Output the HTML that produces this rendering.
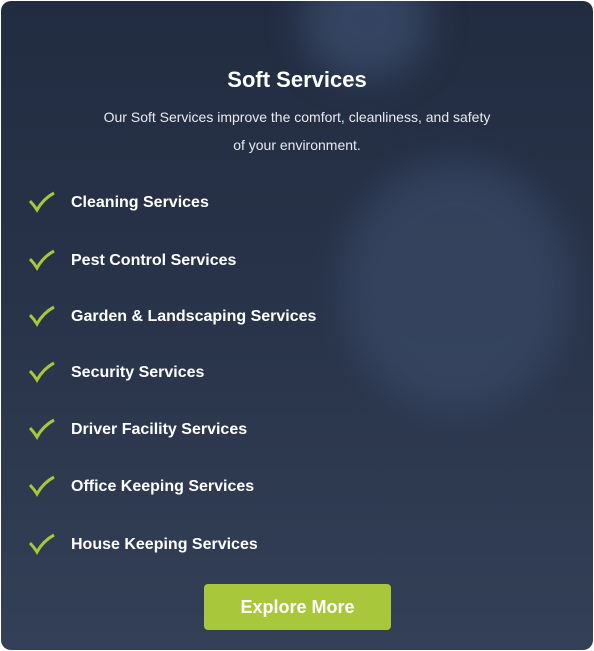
<!DOCTYPE html>
<html><head><meta charset="utf-8"><style>
html,body{margin:0;padding:0;background:#fff;}
body{width:594px;height:651px;overflow:hidden;font-family:"Liberation Sans",sans-serif;}
.card{position:absolute;left:1px;top:1px;width:592px;height:649px;border-radius:10px;overflow:hidden;
background:linear-gradient(180deg,#222c41 0%,#283349 45%,#344057 100%);}
.blob{position:absolute;border-radius:50%;filter:blur(18px);}
h2{position:absolute;left:0;right:0;top:66px;margin:0;text-align:center;color:#fff;font-size:22px;font-weight:bold;}
p{position:absolute;left:80px;right:80px;top:102px;margin:0;text-align:center;color:#e8ebf0;font-size:14px;line-height:28px;}
.item{position:absolute;left:28px;height:24px;color:#fff;font-weight:bold;font-size:16px;}
.item svg{position:absolute;left:0;top:0;}
.item span{position:absolute;left:42px;top:3px;white-space:nowrap;}
.btn{position:absolute;left:204px;top:584px;width:187px;height:46px;background:#a8c73a;border-radius:4px;color:#fff;font-weight:bold;font-size:18px;text-align:center;line-height:47px;}
</style></head><body>
<div class="card">
<div class="blob" style="left:300px;top:-40px;width:130px;height:120px;background:#3a4a68;opacity:.8"></div>
<div class="blob" style="left:340px;top:160px;width:230px;height:250px;background:#3a4966;opacity:.7"></div>
<h2>Soft Services</h2>
<p>Our Soft Services improve the comfort, cleanliness, and safety<br>of your environment.</p>
<div class="item" style="top:190px"><svg width="26" height="22" viewBox="0 0 26 22"><path d="M1 10 Q5 14 8 19 Q14 8 25 2" fill="none" stroke="#a8c73a" stroke-width="3"/></svg><span>Cleaning Services</span></div>
<div class="item" style="top:248px"><svg width="26" height="22" viewBox="0 0 26 22"><path d="M1 10 Q5 14 8 19 Q14 8 25 2" fill="none" stroke="#a8c73a" stroke-width="3"/></svg><span>Pest Control Services</span></div>
<div class="item" style="top:304px"><svg width="26" height="22" viewBox="0 0 26 22"><path d="M1 10 Q5 14 8 19 Q14 8 25 2" fill="none" stroke="#a8c73a" stroke-width="3"/></svg><span>Garden &amp; Landscaping Services</span></div>
<div class="item" style="top:360px"><svg width="26" height="22" viewBox="0 0 26 22"><path d="M1 10 Q5 14 8 19 Q14 8 25 2" fill="none" stroke="#a8c73a" stroke-width="3"/></svg><span>Security Services</span></div>
<div class="item" style="top:417px"><svg width="26" height="22" viewBox="0 0 26 22"><path d="M1 10 Q5 14 8 19 Q14 8 25 2" fill="none" stroke="#a8c73a" stroke-width="3"/></svg><span>Driver Facility Services</span></div>
<div class="item" style="top:474px"><svg width="26" height="22" viewBox="0 0 26 22"><path d="M1 10 Q5 14 8 19 Q14 8 25 2" fill="none" stroke="#a8c73a" stroke-width="3"/></svg><span>Office Keeping Services</span></div>
<div class="item" style="top:532px"><svg width="26" height="22" viewBox="0 0 26 22"><path d="M1 10 Q5 14 8 19 Q14 8 25 2" fill="none" stroke="#a8c73a" stroke-width="3"/></svg><span>House Keeping Services</span></div>
</div>
<div class="btn">Explore More</div>
</body></html>
